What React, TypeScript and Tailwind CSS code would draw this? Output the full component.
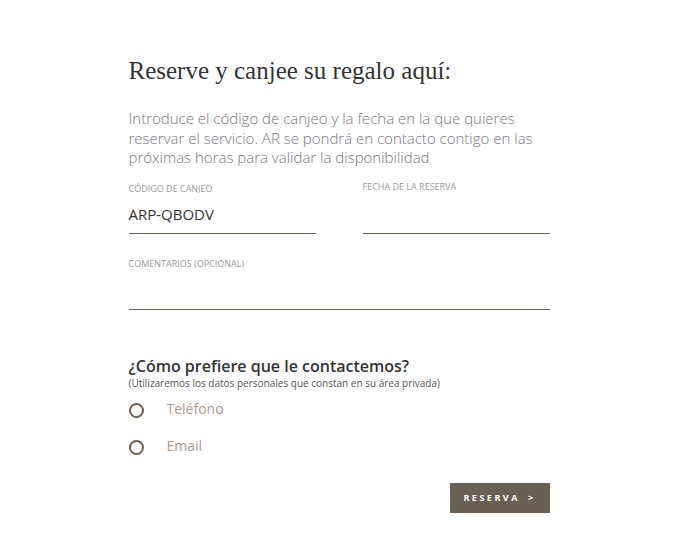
import React from "react";

export default function App() {
  return (
    <div className="min-h-[553px] w-full bg-white" style={{ fontFamily: "'Open Sans', sans-serif" }}>
      <div className="mx-auto w-[421px] pt-[55px]">
        <h1 className="text-[25px] leading-[32px] text-[#333]" style={{ fontFamily: "'Liberation Serif', serif" }}>
          Reserve y canjee su regalo aquí:
        </h1>
        <p className="mt-[22px] text-[15px] leading-[19.5px] font-light text-[#7a7680]">
          Introduce el código de canjeo y la fecha en la que quieres reservar el servicio. AR se pondrá en contacto contigo en las próximas horas para validar la disponibilidad
        </p>
        <div className="mt-[15px] flex gap-[47px]">
          <div className="w-[187px]">
            <div className="text-[9px] leading-[12px] uppercase text-[#999]">Código de canjeo</div>
            <div className="mt-[9px] h-[30px] border-b border-[#6b5e52] text-[15px] leading-[20px] text-[#333]">ARP-QBODV</div>
          </div>
          <div className="w-[187px]">
            <div className="-mt-[2px] text-[9px] leading-[12px] uppercase text-[#999]">Fecha de la reserva</div>
            <div className="mt-[12px] h-[29px] border-b border-[#6b5e52]"></div>
          </div>
        </div>
        <div className="mt-[24px]">
          <div className="text-[9px] leading-[12px] uppercase text-[#999]">Comentarios (opcional)</div>
          <div className="mt-[8px] h-[32px] border-b border-[#6b5e52]"></div>
        </div>
        <div className="mt-[47px]">
          <div className="text-[16px] leading-[19px] font-semibold text-[#333]">¿Cómo prefiere que le contactemos?</div>
          <div className="mt-[1px] text-[10px] leading-[12px] text-[#555]">(Utilizaremos los datos personales que constan en su área privada)</div>
        </div>
        <div className="mt-[14px] flex flex-col gap-[21px]">
          <label className="flex items-center">
            <span className="inline-block h-[15px] w-[15px] rounded-full border-2 border-[#6b5e52]"></span>
            <span className="ml-[23px] -mt-[4px] text-[14px] leading-[20px] text-[#a89a90]">Teléfono</span>
          </label>
          <label className="flex items-center">
            <span className="inline-block h-[15px] w-[15px] rounded-full border-2 border-[#6b5e52]"></span>
            <span className="ml-[23px] -mt-[4px] text-[14px] leading-[20px] text-[#a89a90]">Email</span>
          </label>
        </div>
        <div className="mt-[27px] flex justify-end">
          <button className="flex h-[30px] w-[100px] items-center justify-center bg-[#6b5e52] text-[9px] font-bold tracking-[2.5px] text-white">
            RESERVA<span className="ml-[8px]">&gt;</span>
          </button>
        </div>
      </div>
    </div>
  );
}
